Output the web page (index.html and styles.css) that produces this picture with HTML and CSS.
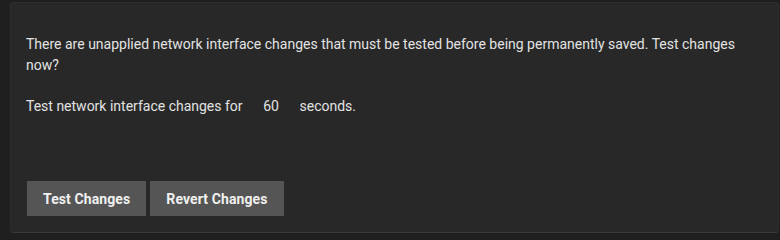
FILE: index.html
```html
<!DOCTYPE html>
<html lang="en">
<head>
<meta charset="utf-8">
<title>Test network interface changes</title>
<link rel="stylesheet" href="styles.css">
</head>
<body>
<div class="card">
  <div class="content">
    <p class="msg">There are unapplied network interface changes that must be tested before being permanently saved. Test changes now?</p>
    <p class="timeout">Test network interface changes for <input class="seconds" type="text" value="60"> seconds.</p>
  </div>
  <div class="actions">
    <button class="btn">Test Changes</button>
    <button class="btn">Revert Changes</button>
  </div>
</div>
</body>
</html>
```

FILE: styles.css
```css
html, body {
  margin: 0;
  padding: 0;
  background: #1f1f1f;
}
body {
  font-family: Roboto, "Noto Sans", Arial, sans-serif;
  color: #e2e2e2;
}
.card {
  box-sizing: border-box;
  margin: 2px 1px 0 10px;
  height: 231px;
  background: #282828;
  border: 1px solid #2e2e2e;
  border-bottom-color: #3a3a3a;
  border-radius: 4px;
  display: flex;
  flex-direction: column;
  padding: 31px 15px 16px;
}
.content {
  flex: 1;
}
.msg, .timeout {
  margin: 0;
  font-size: 14px;
  line-height: 21px;
}
.msg {
  margin-bottom: 20px;
}
.seconds {
  width: 50px;
  box-sizing: border-box;
  background: transparent;
  border: none;
  color: #e2e2e2;
  font: inherit;
  text-align: center;
  padding: 0;
  outline: none;
}
.actions {
  display: flex;
  gap: 4px;
  padding-left: 1px;
}
.btn {
  height: 35px;
  padding: 0 16px;
  border: none;
  border-radius: 0;
  background: #555555;
  color: #f0f0f0;
  font-family: Roboto, "Noto Sans", Arial, sans-serif;
  font-size: 14px;
  font-weight: 700;
  letter-spacing: 0.1px;
}
```
